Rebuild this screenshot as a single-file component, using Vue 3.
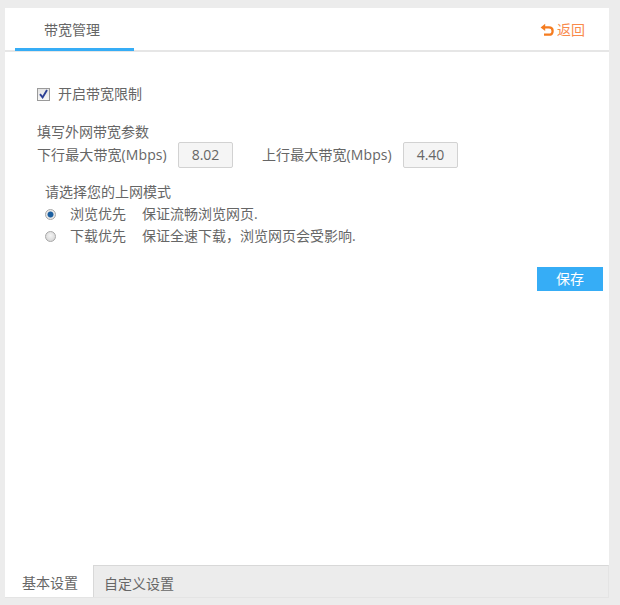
<script setup>
const modes = [
  { name: '浏览优先', desc: '保证流畅浏览网页.', on: true },
  { name: '下载优先', desc: '保证全速下载，浏览网页会受影响.', on: false }
]
const limits = [
  { label: '下行最大带宽(Mbps)', value: '8.02' },
  { label: '上行最大带宽(Mbps)', value: '4.40' }
]
</script>

<template>
  <div class="page">
    <div class="panel">
      <header class="head">
        <div class="tab">带宽管理</div>
        <a class="back">
          <svg width="14" height="14" viewBox="0 0 14 14" fill="none">
            <path d="M0.6 4.4 L5.2 0.8 L5.2 8 Z" fill="#f57c1f" />
            <path d="M4.5 4.4 H9 C11.4 4.4 12.6 5.9 12.6 7.9 C12.6 10.1 11.2 11.7 9 11.7 H4" stroke="#f57c1f" stroke-width="2.3" />
          </svg>
          <span>返回</span>
        </a>
      </header>
      <main class="body">
        <label class="check">
          <span class="box">
            <svg width="9" height="10" viewBox="0 0 9 10" fill="none"><path d="M1 5.2 L3.6 8.4 L8 1" stroke="#2c3f94" stroke-width="1.9" /></svg>
          </span>
          开启带宽限制
        </label>
        <div class="params">
          <div class="title">填写外网带宽参数</div>
          <div class="limits">
            <div v-for="l in limits" :key="l.label" class="limit">
              <span class="lname">{{ l.label }}</span>
              <span class="val">{{ l.value }}</span>
            </div>
          </div>
        </div>
        <div class="modes">
          <div class="title">请选择您的上网模式</div>
          <div class="mlist">
            <div v-for="m in modes" :key="m.name" class="mode">
              <span class="radio" :class="{ on: m.on }"></span>
              <span class="mname">{{ m.name }}</span>
              <span>{{ m.desc }}</span>
            </div>
          </div>
        </div>
        <div class="actions"><button class="save">保存</button></div>
      </main>
      <footer class="foot">
        <div class="ftab active">基本设置</div>
        <div class="ftab">自定义设置</div>
      </footer>
    </div>
  </div>
</template>

<style>
html, body { margin: 0; background: #ececec; }
</style>

<style scoped>
.page {
  width: 620px;
  height: 605px;
  box-sizing: border-box;
  padding: 8px 11px 7px 5px;
  background: #ececec;
  font: 14px/20px "Open Sans", "Noto Sans CJK SC", sans-serif;
  color: #666;
  overflow: hidden;
}
.panel {
  height: 100%;
  display: flex;
  flex-direction: column;
  background: #fff;
}
.head {
  height: 44px;
  flex: none;
  box-sizing: border-box;
  border-bottom: 2px solid #e6e6e6;
  display: flex;
  justify-content: space-between;
  padding: 0 24px 0 10px;
}
.tab {
  width: 119px;
  height: 43px;
  box-sizing: border-box;
  border-bottom: 3px solid #36adf6;
  padding: 12px 0 0 29px;
}
.back {
  display: flex;
  align-items: center;
  gap: 3px;
  height: 42px;
  padding-top: 2px;
  box-sizing: border-box;
  color: #f98a4b;
}
.body {
  flex: 1;
  padding: 32px 6px 0 32px;
}
.check {
  display: flex;
  align-items: center;
  gap: 8px;
  height: 20px;
}
.box {
  width: 11px;
  height: 11px;
  border: 1px solid #9a9a9a;
  background: linear-gradient(#e4e4e4, #f6f6f6);
  display: flex;
  align-items: center;
  justify-content: center;
}
.params {
  margin-top: 18px;
}
.limits {
  display: flex;
  gap: 29px;
}
.limit {
  display: flex;
  align-items: center;
  gap: 12px;
}
.lname { width: 129px; white-space: nowrap; letter-spacing: 0.1px; }
.val {
  width: 53px;
  height: 24px;
  border: 1px solid #d2d2d2;
  border-radius: 2px;
  background: #f5f5f5;
  text-align: center;
  line-height: 24px;
}
.modes {
  margin-top: 14px;
  padding-left: 8px;
}
.mlist { margin-top: 1px; }
.mode {
  display: flex;
  align-items: center;
  height: 22px;
}
.radio {
  width: 11px;
  height: 11px;
  box-sizing: border-box;
  border-radius: 50%;
  border: 1px solid #a8a8a8;
  background: radial-gradient(circle at 50% 40%, #f4f4f4, #cfcfcf);
  margin-right: 14px;
  flex: none;
}
.radio.on {
  background: radial-gradient(circle, #1c5fa0 0 2.6px, #e8e8e8 3.4px);
}
.mname { width: 56px; margin-right: 16px; }
.actions {
  display: flex;
  justify-content: flex-end;
  margin-top: 20px;
}
.save {
  width: 66px;
  height: 24px;
  border: 0;
  padding: 0;
  background: #36adf6;
  color: #fff;
  font: inherit;
}
.foot {
  height: 33px;
  flex: none;
  box-sizing: border-box;
  display: flex;
  background: #ececec;
  border-top: 1px solid #d8d8d8;
  border-right: 1px solid #e4e4e4;
  border-bottom: 1px solid #e4e4e4;
}
.ftab {
  height: 31px;
  line-height: 35px;
  padding: 0 10px;
}
.ftab.active {
  width: 89px;
  box-sizing: border-box;
  padding-left: 17px;
  margin-top: -1px;
  height: 32px;
  background: #fff;
  border-right: 1px solid #d8d8d8;
}
</style>
